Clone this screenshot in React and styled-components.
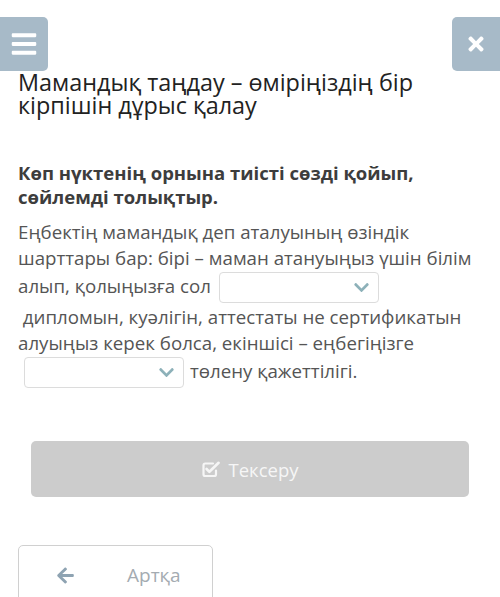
import React from 'react';
import styled, { createGlobalStyle } from 'styled-components';
import { FaBars, FaTimes, FaArrowLeft, FaChevronDown } from 'react-icons/fa';

const GlobalStyle = createGlobalStyle`
  body {
    margin: 0;
    background: #ffffff;
    font-family: "Open Sans", "Noto Sans", sans-serif;
  }
`;

const Page = styled.div`
  width: 500px;
  overflow: hidden;
`;

const TopBar = styled.div`
  display: flex;
  justify-content: space-between;
  margin-top: 17px;
`;

const SquareButton = styled.div`
  width: 48px;
  height: 54px;
  background: #a7bac8;
  border-radius: ${({ side }) => (side === 'left' ? '0 5px 5px 0' : '5px 0 0 5px')};
  display: flex;
  align-items: center;
  justify-content: center;
  color: #ffffff;
  font-size: ${({ side }) => (side === 'left' ? '28px' : '22px')};
`;

const Title = styled.h1`
  margin: 0;
  padding: 0 18px;
  font-size: 23.4px;
  font-weight: 400;
  line-height: 23px;
  color: #222222;
`;

const Question = styled.h2`
  margin: 44px 0 0;
  padding: 0 18px;
  font-size: 18.5px;
  font-weight: 700;
  line-height: 24px;
  color: #3d3d3d;
`;

const Text = styled.p`
  margin: 10px 0 0;
  padding: 0 18px;
  font-size: 18.7px;
  line-height: 26px;
  color: #555555;
`;

const Dropdown = styled.span`
  display: inline-flex;
  align-items: center;
  justify-content: flex-end;
  box-sizing: border-box;
  width: 160px;
  height: 31px;
  margin: ${({ lead }) => (lead ? '1px 6px 1px 6px' : '1px 0 1px 8px')};
  padding-right: 8px;
  border: 1px solid #dcdcdc;
  border-radius: 4px;
  vertical-align: middle;
  color: #8db1b9;
  font-size: 17px;
`;

const CheckButton = styled.div`
  margin: 52px 31px 0;
  height: 56px;
  border-radius: 5px;
  background: #cccccc;
  color: #f6f6f6;
  display: flex;
  align-items: center;
  justify-content: center;
  gap: 8px;
  font-size: 18.5px;
`;

const BackButton = styled.div`
  margin: 48px 0 0 18px;
  width: 195px;
  height: 60px;
  box-sizing: border-box;
  border: 1px solid #d0d0d0;
  border-radius: 5px;
  display: flex;
  align-items: center;
  padding-left: 37px;
  gap: 52px;
  color: #a4abb1;
  font-size: 19px;

  svg {
    color: #8ea3b2;
  }
`;

// check-square-o: outlined box with a tick running past its top-right corner
const CheckSquareIcon = () => (
  <svg width="19" height="17" viewBox="0 0 19 17" fill="none">
    <path
      d="M14 9.5V13.2C14 14.2 13.2 15 12.2 15H3.3C2.3 15 1.5 14.2 1.5 13.2V4.3C1.5 3.3 2.3 2.5 3.3 2.5H11"
      stroke="currentColor"
      strokeWidth="2.2"
      strokeLinecap="round"
    />
    <path
      d="M4.6 8L7.4 10.8L16.6 1.8"
      stroke="currentColor"
      strokeWidth="2.6"
      strokeLinecap="round"
      strokeLinejoin="round"
    />
  </svg>
);

const App = () => (
  <Page>
    <GlobalStyle />
    <TopBar>
      <SquareButton side="left"><FaBars /></SquareButton>
      <SquareButton side="right"><FaTimes /></SquareButton>
    </TopBar>
    <Title>Мамандық таңдау – өміріңіздің бір кірпішін дұрыс қалау</Title>
    <Question>Көп нүктенің орнына тиісті сөзді қойып, сөйлемді толықтыр.</Question>
    <Text>
      Еңбектің мамандық деп аталуының өзіндік шарттары бар: бірі – маман атануыңыз үшін білім алып, қолыңызға сол
      <Dropdown><FaChevronDown /></Dropdown>
      <br />
      {'\u00a0'}дипломын, куәлігін, аттестаты не сертификатын алуыңыз керек болса, екіншісі – еңбегіңізге
      <br />
      <Dropdown lead><FaChevronDown /></Dropdown>
      төлену қажеттілігі.
    </Text>
    <CheckButton><CheckSquareIcon />Тексеру</CheckButton>
    <BackButton><FaArrowLeft />Артқа</BackButton>
  </Page>
);

export default App;
